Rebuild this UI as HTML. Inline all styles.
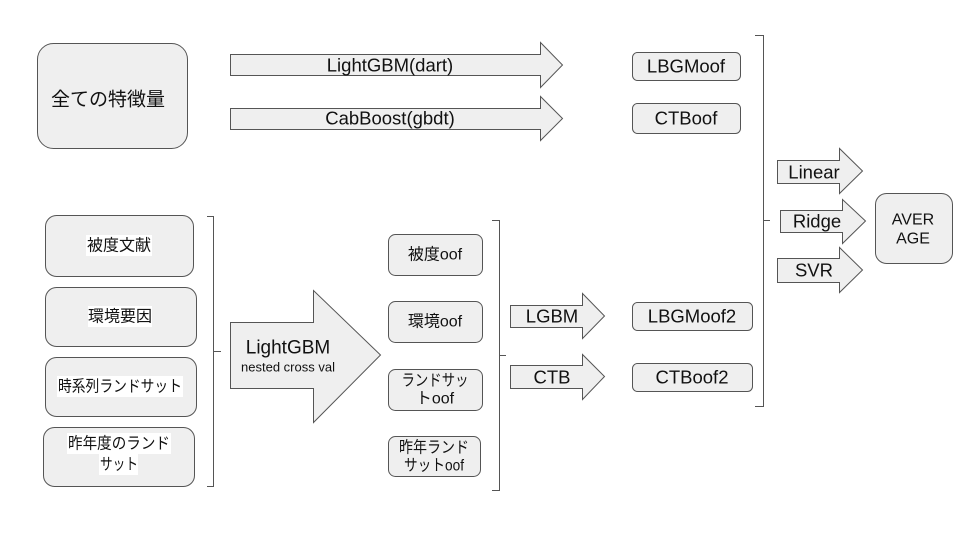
<!DOCTYPE html>
<html><head><meta charset="utf-8"><style>
html,body{margin:0;padding:0;background:#fff;width:960px;height:540px;overflow:hidden}
svg text{font-family:"Liberation Sans","Noto Sans CJK JP",sans-serif;fill:#111;text-anchor:middle;dominant-baseline:central}
</style></head><body>
<svg width="960" height="540" viewBox="0 0 960 540" xmlns="http://www.w3.org/2000/svg">
<g fill="#efefef" stroke="#555" stroke-width="1">
<rect x="37.5" y="43.5" width="150" height="105" rx="16"/>
<path d="M230.5 54.5H540.5V42.5L562.5 65L540.5 87.5V75.5H230.5Z"/>
<path d="M230.5 108.5H540.5V96.5L562.5 118.5L540.5 140.5V129.5H230.5Z"/>
<rect x="632.5" y="52.5" width="108" height="28" rx="5"/>
<rect x="632.5" y="103.5" width="108" height="30" rx="5"/>
<path d="M777.5 160.5H839.5V148.5L862.5 171L839.5 193.5V183.5H777.5Z"/>
<path d="M780.5 210.5H842.5V199.5L865.5 221L842.5 243.5V232.5H780.5Z"/>
<path d="M777.5 258.5H839.5V247.5L862.5 270L839.5 292.5V282.5H777.5Z"/>
<rect x="875.5" y="193.5" width="77" height="70" rx="11"/>
<path d="M510.5 305.5H582.5V293.5L604.5 316L582.5 338.5V327.5H510.5Z"/>
<path d="M510.5 365.5H582.5V354.5L604.5 376.5L582.5 399.5V388.5H510.5Z"/>
<rect x="632.5" y="302.5" width="120" height="28" rx="5"/>
<rect x="632.5" y="363.5" width="120" height="28" rx="5"/>
<rect x="45.5" y="215.5" width="148" height="61" rx="11"/>
<rect x="45.5" y="287.5" width="151" height="59" rx="11"/>
<rect x="45.5" y="357.5" width="151" height="59" rx="11"/>
<rect x="43.5" y="427.5" width="151" height="59" rx="11"/>
<path d="M230.5 322.5H313.5V290.5L380.5 355L313.5 422.5V388.5H230.5Z"/>
<rect x="388.5" y="234.5" width="94" height="41" rx="7"/>
<rect x="388.5" y="301.5" width="94" height="41" rx="7"/>
<rect x="388.5" y="369.5" width="94" height="41" rx="7"/>
<rect x="388.5" y="436.5" width="92" height="40" rx="7"/>
</g>
<g fill="none" stroke="#555" stroke-width="1">
<path d="M207 216.5H213.5V486.5H207M213.5 351.5H221"/>
<path d="M492 220.5H499.5V490.5H492M499.5 355.5H506"/>
<path d="M755 35.5H763.5V406.5H755M763.5 220.5H770"/>
</g>
<g fill="#fff">
<rect x="86" y="235" width="66" height="21"/><rect x="88" y="306" width="64" height="21"/>
<rect x="57" y="376" width="126" height="21"/><rect x="67" y="433" width="104" height="21"/>
<rect x="99" y="454" width="39" height="21"/>
</g>
<text x="108" y="100" font-size="19">全ての特徴量</text>
<text x="390" y="65" font-size="18.5">LightGBM(dart)</text>
<text x="390" y="118" font-size="18.5">CabBoost(gbdt)</text>
<text x="686" y="66" font-size="18.5">LBGMoof</text>
<text x="686" y="118" font-size="18.5">CTBoof</text>
<text x="814" y="172" font-size="18.5">Linear</text>
<text x="817" y="221" font-size="18.5">Ridge</text>
<text x="814" y="270" font-size="18.5">SVR</text>
<text x="913" y="220" font-size="16">AVER</text>
<text x="913" y="239" font-size="16">AGE</text>
<text x="552" y="316" font-size="18.5">LGBM</text>
<text x="552" y="377" font-size="18.5">CTB</text>
<text x="692" y="316" font-size="18.5">LBGMoof2</text>
<text x="692" y="377" font-size="18.5">CTBoof2</text>
<text x="119" y="246" font-size="16">被度文献</text>
<text x="120" y="317" font-size="16">環境要因</text>
<text x="120" y="387" font-size="16" textLength="124" lengthAdjust="spacingAndGlyphs">時系列ランドサット</text>
<text x="119" y="444" font-size="16" textLength="102" lengthAdjust="spacingAndGlyphs">昨年度のランド</text>
<text x="119" y="465" font-size="16" textLength="38" lengthAdjust="spacingAndGlyphs">サット</text>
<text x="288" y="348" font-size="19">LightGBM</text>
<text x="288" y="367" font-size="13">nested cross val</text>
<text x="435" y="255" font-size="16">被度oof</text>
<text x="435" y="322" font-size="16">環境oof</text>
<text x="435" y="381" font-size="16" textLength="67" lengthAdjust="spacingAndGlyphs">ランドサッ</text>
<text x="435" y="399" font-size="16">トoof</text>
<text x="434" y="448" font-size="16" textLength="70" lengthAdjust="spacingAndGlyphs">昨年ランド</text>
<text x="434" y="466" font-size="16" textLength="60" lengthAdjust="spacingAndGlyphs">サットoof</text>
</svg>
</body></html>
